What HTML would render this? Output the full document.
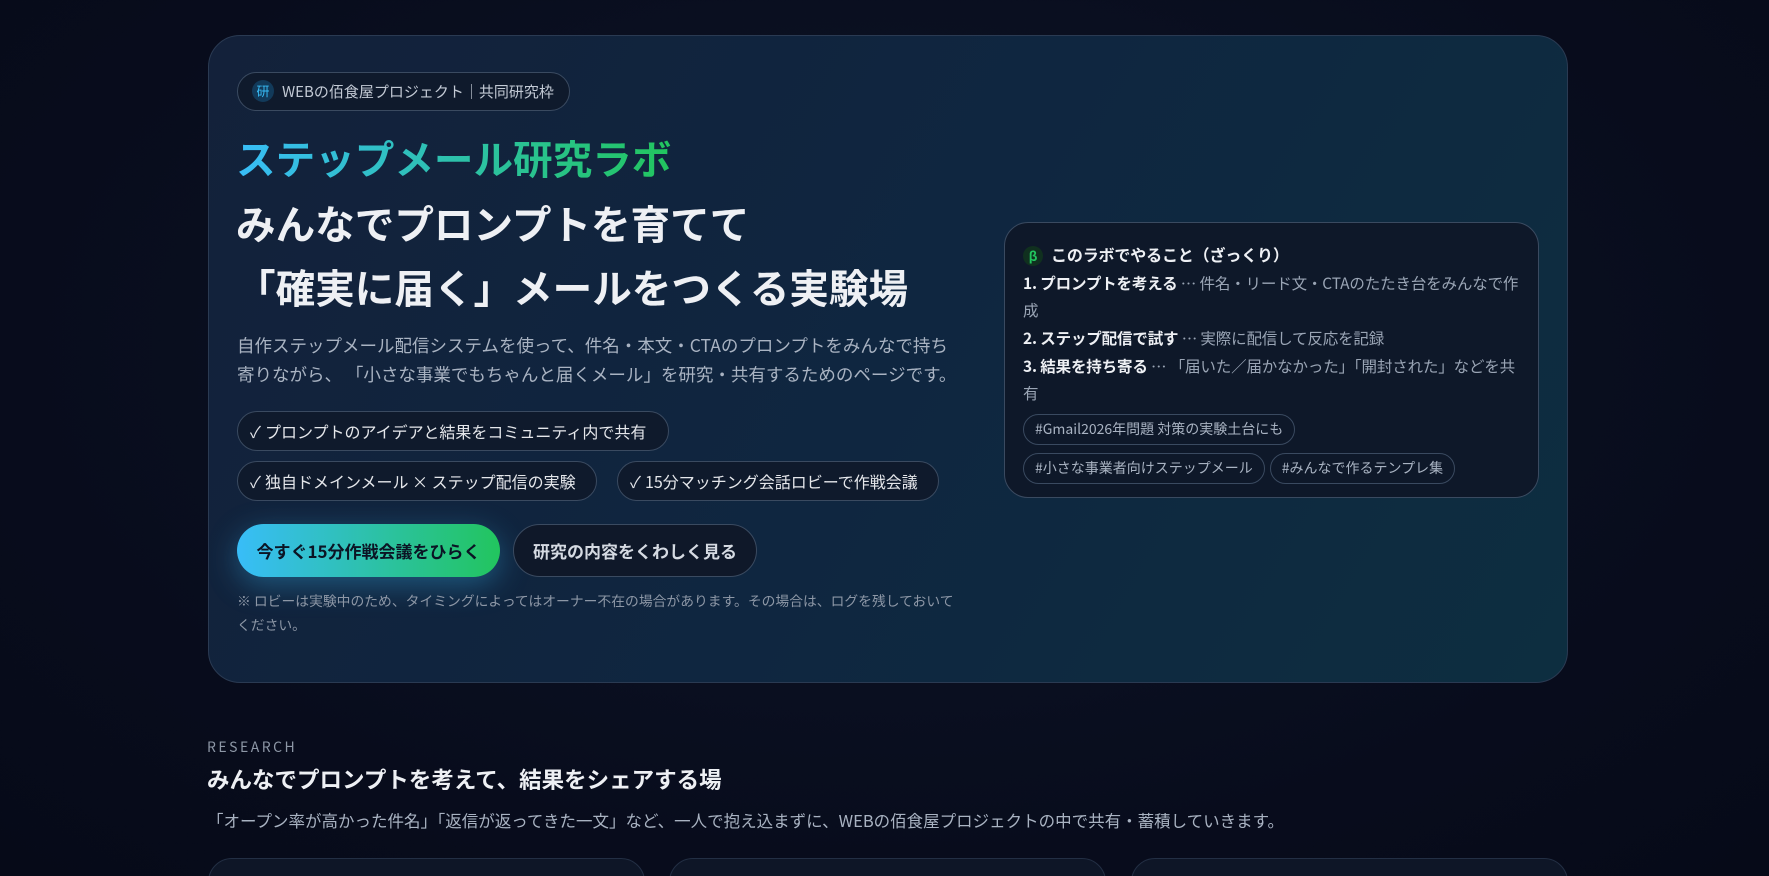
<!DOCTYPE html>
<html><head><meta charset="utf-8"><style>
*{box-sizing:border-box;margin:0;padding:0}
html,body{width:1769px;height:876px;overflow:hidden}
body{background:radial-gradient(ellipse at 50% 40%,#0d1528 0%,#080c1c 70%,#060a18 100%);font-family:"Noto Sans CJK JP","Liberation Sans",sans-serif;color:#e5e7eb;position:relative}
.abs{position:absolute;white-space:nowrap}
.hero{position:absolute;left:208px;top:35px;width:1360px;height:648px;border-radius:32px;border:1px solid #2a3a52;background:linear-gradient(120deg,#13213a 0%,#0f2640 50%,#0d2e40 100%)}
.pill{position:absolute;border:1px solid #3a4a60;border-radius:20px;background:#0f1a2c;color:#e5e7eb;font-size:16px;height:40px;line-height:38px;padding:0 14px 0 12px;white-space:nowrap}
.pill .c{margin-right:4px}
.badge{left:237px;top:72px;height:39px;line-height:37px;font-size:15px;color:#c3cad5;padding:0 15px 0 14px}
.badge i{display:inline-block;width:22px;height:22px;border-radius:50%;background:#123a5a;color:#38bdf8;font-style:normal;font-size:13px;line-height:22px;text-align:center;margin-right:8px;vertical-align:1px}
.title{left:236px;top:130px;font-size:39.6px;font-weight:bold;background:linear-gradient(90deg,#38bdf8,#22c55e);-webkit-background-clip:text;background-clip:text;color:transparent;line-height:56px}
.h{font-size:39.6px;font-weight:bold;color:#eef0f4;line-height:56px}
.p{font-size:17.5px;color:#a9b3c2;line-height:29px}
.side{position:absolute;left:1004px;top:222px;width:535px;height:276px;border-radius:24px;border:1px solid #3a4a60;background:#0e1829;padding:18px 16px 18px 18px}
.side .l{font-size:15.5px;line-height:27px;color:#9aa5b5;white-space:normal;letter-spacing:-0.15px}
.side b{color:#eef0f4}
.tag{display:inline-block;border:1px solid #3a4a60;border-radius:16px;height:31px;line-height:29px;padding:0 11px;font-size:14px;color:#a9b3c2;margin:0 5px 8px 0}
.btn1{position:absolute;left:237px;top:524px;width:263px;height:53px;border-radius:27px;background:linear-gradient(90deg,#38bdf8,#22c55e);color:#0b1424;font-weight:bold;font-size:17px;line-height:53px;text-align:center;box-shadow:0 8px 30px rgba(56,189,248,.35)}
.btn2{position:absolute;left:513px;top:524px;width:244px;height:53px;border-radius:27px;border:1px solid #3a4a60;background:#0f1829;color:#d5dae2;font-weight:bold;font-size:17px;line-height:51px;text-align:center}
.card{position:absolute;top:858px;width:437px;height:60px;border-radius:24px;border:1px solid #232f44;background:#0e1627}
</style></head><body>
<div class="hero"></div>
<div class="pill badge"><i>研</i>WEBの佰食屋プロジェクト｜共同研究枠</div>
<div class="abs title">ステップメール研究ラボ</div>
<div class="abs h" style="left:236px;top:195px">みんなでプロンプトを育てて</div>
<div class="abs h" style="left:236px;top:259px">「確実に届く」メールをつくる実験場</div>
<div class="abs p" style="left:237px;top:331px">自作ステップメール配信システムを使って、件名・本文・CTAのプロンプトをみんなで持ち</div>
<div class="abs p" style="left:237px;top:360px">寄りながら、 「小さな事業でもちゃんと届くメール」を研究・共有するためのページです。</div>
<div class="pill" style="left:237px;top:411px;padding-right:22px"><span class="c">✓</span>プロンプトのアイデアと結果をコミュニティ内で共有</div>
<div class="pill" style="left:237px;top:461px;padding-right:20px"><span class="c">✓</span>独自ドメインメール × ステップ配信の実験</div>
<div class="pill" style="left:617px;top:461px;padding-right:20px"><span class="c">✓</span>15分マッチング会話ロビーで作戦会議</div>
<div class="btn1">今すぐ15分作戦会議をひらく</div>
<div class="btn2">研究の内容をくわしく見る</div>
<div class="abs" style="left:237px;top:588px;font-size:13.8px;color:#8d97a6;line-height:24px">※ ロビーは実験中のため、タイミングによってはオーナー不在の場合があります。その場合は、ログを残しておいて<br>ください。</div>
<div class="side">
<div class="l" style="color:#eef0f4;font-weight:bold;font-size:16px;margin-bottom:2px"><span style="display:inline-block;width:20px;height:20px;border-radius:50%;background:#10301f;color:#22c55e;text-align:center;line-height:20px;font-size:13px;margin-right:8px">β</span>このラボでやること（ざっくり）</div>
<div class="l"><b>1. プロンプトを考える</b> … 件名・リード文・CTAのたたき台をみんなで作成</div>
<div class="l" style="margin-top:1px"><b>2. ステップ配信で試す</b> … 実際に配信して反応を記録</div>
<div class="l" style="margin-top:1px"><b>3. 結果を持ち寄る</b> … 「届いた／届かなかった」「開封された」などを共有</div>
<div style="margin-top:7px"><span class="tag">#Gmail2026年問題 対策の実験土台にも</span><br><span class="tag">#小さな事業者向けステップメール</span><span class="tag">#みんなで作るテンプレ集</span></div>
</div>
<div class="abs" style="left:207px;top:737px;font-size:14px;letter-spacing:2.5px;color:#8d97a6">RESEARCH</div>
<div class="abs" style="left:207px;top:763px;font-size:22.5px;font-weight:bold;color:#eef0f4">みんなでプロンプトを考えて、結果をシェアする場</div>
<div class="abs" style="left:207px;top:808px;font-size:16.5px;color:#a9b3c2">「オープン率が高かった件名」「返信が返ってきた一文」など、一人で抱え込まずに、WEBの佰食屋プロジェクトの中で共有・蓄積していきます。</div>
<div class="card" style="left:208px"></div>
<div class="card" style="left:669px"></div>
<div class="card" style="left:1131px"></div>
</body></html>
